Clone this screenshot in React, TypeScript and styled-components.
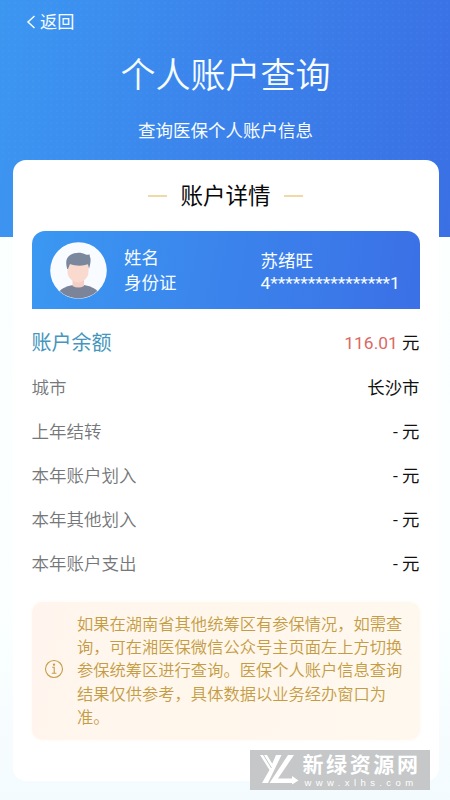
import React from "react";
import styled, { createGlobalStyle } from "styled-components";

const GlobalStyle = createGlobalStyle`
  * { box-sizing: border-box; }
  body {
    margin: 0;
    background: #f9feff;
    font-family: Roboto, "Noto Sans CJK SC", sans-serif;
  }
  h1, h2, p, dl, dt, dd { margin: 0; font-weight: 400; }
`;

const Page = styled.div`
  position: relative;
  width: 450px;
  height: 800px;
  overflow: hidden;
  background:
    linear-gradient(99deg, #3c97f1 0%, #3b82eb 50%, #3a70e4 100%) 0 0 / 100% 237px no-repeat,
    linear-gradient(#fafffe 0%, #fbffff 75%, #f4fbfe 100%);
`;

const Header = styled.header`
  height: 160px;
  color: #f6fcff;
  background: radial-gradient(circle, rgba(140, 190, 255, 0.07) 0.6px, transparent 1px) 0 0 / 6px 6px;
`;

const BackButton = styled.button`
  display: flex;
  align-items: center;
  gap: 4px;
  height: 45px;
  padding: 0 0 0 26px;
  border: 0;
  background: none;
  color: inherit;
  font: 400 17.2px/45px Roboto, "Noto Sans CJK SC", sans-serif;
`;

const PageTitle = styled.h1`
  padding: 2px 0 0 1px;
  text-align: center;
  font-size: 35px;
  font-weight: 350;
  line-height: 60px;
`;

const Subtitle = styled.p`
  margin-top: 9px;
  padding-left: 1px;
  text-align: center;
  font-size: 17.5px;
  line-height: 30px;
`;

const Card = styled.main`
  width: 426px;
  height: 621px;
  margin-left: 12.5px;
  padding: 0 19px;
  border-radius: 13px;
  background: #fff;
`;

const SectionTitle = styled.h2`
  display: flex;
  align-items: center;
  justify-content: center;
  gap: 13px;
  height: 70.5px;
  padding-top: 1px;
  font-size: 22.5px;
  line-height: 70px;
  color: #080808;

  &::before, &::after {
    content: "";
    width: 19px;
    height: 2px;
    background: #efd9a7;
  }
`;

const Profile = styled.section`
  display: grid;
  grid-template-columns: 57px 137px 1fr;
  height: 78.5px;
  padding: 11.5px 0 0 18px;
  border-radius: 13px 13px 0 0;
  background: linear-gradient(100deg, #3a98f2 0%, #3b83ec 50%, #3b70e6 100%);
  color: #f6fcff;
`;

const ProfileColumn = styled.div<{ $top: number; $left: number; $line: number }>`
  padding: ${(p) => p.$top}px 0 0 ${(p) => p.$left}px;
  font-size: 17.5px;
  line-height: ${(p) => p.$line}px;
  white-space: nowrap;
`;

const IdNumber = styled.div`
  font-size: 17.4px;
`;

const Rows = styled.dl`
  padding-top: 12px;
`;

const Row = styled.div<{ $lead?: boolean }>`
  display: flex;
  justify-content: space-between;
  height: ${(p) => (p.$lead ? 45 : 44)}px;
  line-height: 45px;
  font-size: 17.4px;
  color: #111;
`;

const Label = styled.dt<{ $lead?: boolean }>`
  font-size: ${(p) => (p.$lead ? 20 : 17.5)}px;
  font-weight: ${(p) => (p.$lead ? 400 : 350)};
  color: ${(p) => (p.$lead ? "#4596bd" : "#75777a")};
`;

const Amount = styled.span`
  color: #db6863;
`;

const Notice = styled.aside`
  display: grid;
  grid-template-columns: 45.5px 1fr;
  align-items: center;
  height: 138px;
  margin-top: 15.5px;
  border-radius: 10px;
  background: linear-gradient(100deg, #fff5ee, #fff7ec 45%, #fff8ef);
  box-shadow: 0 0 4px #fffaf3;
  color: #c49c44;

  svg { margin-left: 12px; margin-top: -4px; }

  p {
    width: 328px;
    font-size: 16.27px;
    font-weight: 350;
    line-height: 23.35px;
    margin-top: 1px;
  }
`;

const Watermark = styled.div`
  position: absolute;
  left: 250px;
  top: 750px;
  display: flex;
  width: 180px;
  height: 40px;
  padding-left: 10px;
  background: #c5c7c8;
  color: #fff;
`;

const WatermarkText = styled.div`
  display: flex;
  flex-direction: column;
  padding: 4px 0 0 2.5px;
  white-space: nowrap;

  strong { font-size: 21px; line-height: 23px; letter-spacing: 2.6px; font-weight: 700; }
  span { padding: 1px 0 0 2px; font: 400 9.5px/9px "Liberation Sans", sans-serif; letter-spacing: 4.4px; }
`;

const Avatar = () => (
  <svg width="57" height="57" viewBox="0 0 57 57" aria-hidden="true">
    <defs><clipPath id="face"><circle cx="28.5" cy="28.5" r="28" /></clipPath></defs>
    <circle cx="28.5" cy="28.5" r="28.300" fill="#f8fbff" />
    <g clipPath="url(#face)">
      <path d="M9 57v-7c3-4 8-6 14-7h11c6 1 11 3 14 7v7Z" fill="#7b8498" />
      <path d="M22.500 35h11.500v9q-5.500 3-11.500 0Z" fill="#f5cfc5" />
      <path d="M17.500 22h21v8c0 6-6 10.500-10.500 10.500S17.500 36 17.500 30Z" fill="#fad9cf" />
      <path d="M17.200 27c-2-7-1-11.500 3-14 5-3 11-3 15.500-.5 1.500.6 2.500.3 3.800-.2l.3 2 .5 1.500c.8 3-.2 7.500-1.300 11l-1-4.500c-6 2.200-13 1.500-18-.3L18 27Z" fill="#7b879d" />
    </g>
  </svg>
);

const InfoIcon = () => (
  <svg width="20" height="20" viewBox="0 0 20 20" fill="none" stroke="currentColor" strokeWidth="1.100" aria-hidden="true">
    <circle cx="10" cy="10" r="8.500" />
    <path d="M8.200 8.300h2v6M7.800 14.300h4.600" />
    <circle cx="10" cy="5.700" r=".6" fill="currentColor" />
  </svg>
);

const WatermarkLogo = () => (
  <svg width="40" height="40" viewBox="0 0 40 40" aria-hidden="true">
    <path d="M0 5h7l6 10-3.500 5ZM16 5h5.500L8 33H2l8-14ZM28 5h6L18 28.500h14V26l6.500 4.500-6.500 4V33H9.500Z" fill="#fff" />
    <path d="m3.500 5 8 13" stroke="#c5c7c8" strokeWidth="1" />
  </svg>
);

const details = [
  { label: "城市", value: "长沙市" },
  { label: "上年结转", value: "- 元" },
  { label: "本年账户划入", value: "- 元" },
  { label: "本年其他划入", value: "- 元" },
  { label: "本年账户支出", value: "- 元" },
];

export default function App() {
  return (
    <>
      <GlobalStyle />
      <Page>
        <Header>
          <BackButton>
            <svg width="10" height="15" viewBox="0 0 10 15" fill="none" stroke="currentColor" strokeWidth="1.500">
              <path d="M8.500 1 2 7l6.500 6" />
            </svg>
            返回
          </BackButton>
          <PageTitle>个人账户查询</PageTitle>
          <Subtitle>查询医保个人账户信息</Subtitle>
        </Header>
        <Card>
          <SectionTitle>账户详情</SectionTitle>
          <Profile>
            <Avatar />
            <ProfileColumn $top={3.5} $left={17.5} $line={25.8}>
              <div>姓名</div>
              <div>身份证</div>
            </ProfileColumn>
            <ProfileColumn $top={7.5} $left={17} $line={22}>
              <div>苏绪旺</div>
              <IdNumber>4****************1</IdNumber>
            </ProfileColumn>
          </Profile>
          <Rows>
            <Row $lead>
              <Label $lead>账户余额</Label>
              <dd><Amount>116.01</Amount> 元</dd>
            </Row>
            {details.map(({ label, value }) => (
              <Row key={label}>
                <Label>{label}</Label>
                <dd>{value}</dd>
              </Row>
            ))}
          </Rows>
          <Notice>
            <InfoIcon />
            <p>如果在湖南省其他统筹区有参保情况，如需查询，可在湘医保微信公众号主页面左上方切换参保统筹区进行查询。医保个人账户信息查询结果仅供参考，具体数据以业务经办窗口为准。</p>
          </Notice>
        </Card>
        <Watermark>
          <WatermarkLogo />
          <WatermarkText>
            <strong>新绿资源网</strong>
            <span>www.xlhs.com</span>
          </WatermarkText>
        </Watermark>
      </Page>
    </>
  );
}
